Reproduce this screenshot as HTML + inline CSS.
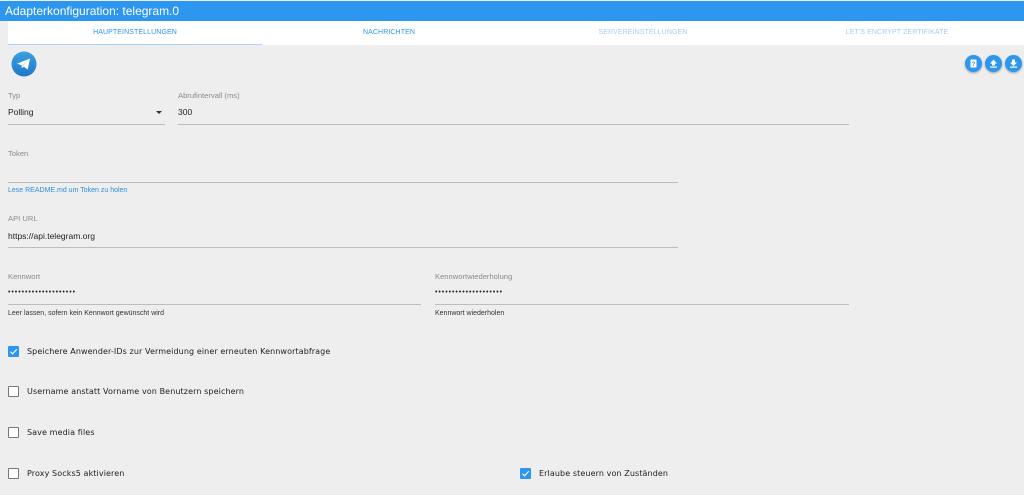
<!DOCTYPE html>
<html><head><meta charset="utf-8"><style>
*{margin:0;padding:0;box-sizing:border-box}
body{width:1024px;height:495px;background:#eeeeee;font-family:"Liberation Sans",sans-serif;position:relative;overflow:hidden}
.a{position:absolute}
.hdr{left:0;top:1px;width:1024px;height:20px;background:#2d97f0;color:#fff;font-size:12px;line-height:20px;padding-left:5px}
.tabs{left:8px;top:21px;width:1016px;height:24px;background:#fff}
.tab{position:absolute;top:0;width:254px;height:24px;line-height:24px;text-align:center;font-size:7px;color:#2d97f0;letter-spacing:0.1px}
.lbl{font-size:7.6px;color:#8a8a8a}
.val{font-size:8.5px;color:#222}
.dots{font-size:7px;color:#222;letter-spacing:0.95px}
.line{height:1px;background:#bdbdbd}
.help{font-size:7px;color:#333}
.cb{width:11px;height:11px;border:1px solid #777;border-radius:1px;background:#fff}
.cb.on{background:#2d97f0;border-color:#2d97f0}
.ct{font-family:"DejaVu Sans",sans-serif;font-size:8px;color:#222;letter-spacing:0.1px}
.btn{width:17px;height:17px;border-radius:50%;background:#2d97f0;box-shadow:0 1px 2px rgba(0,0,0,.35)}
</style></head><body>
<div class="a hdr">Adapterkonfiguration: telegram.0</div>
<div class="a tabs">
<div class="tab" style="left:0">HAUPTEINSTELLUNGEN</div>
<div class="tab" style="left:254px">NACHRICHTEN</div>
<div class="tab" style="left:508px;color:#a6cdf3">SERVEREINSTELLUNGEN</div>
<div class="tab" style="left:762px;color:#a6cdf3">LET'S ENCRYPT ZERTIFIKATE</div>
<div class="a" style="left:0;top:23px;width:254px;height:1px;background:#aed3f6"></div>
</div>
<svg class="a" style="left:11px;top:51px" width="26" height="26" viewBox="0 0 26 26"><defs><linearGradient id="g" x1="0" y1="0" x2="0" y2="1"><stop offset="0" stop-color="#3aa0e6"/><stop offset="1" stop-color="#1f78c8"/></linearGradient></defs><circle cx="13" cy="13" r="12.5" fill="url(#g)"/><path d="M6 12.6 L19 7.5 L16.8 18.5 L12.6 15.6 L10.8 17.3 L10.6 14.4 Z" fill="#fff"/><path d="M10.6 14.4 L17 9.4 L12 15.2" fill="#cfe3f5"/></svg>
<div class="a btn" style="left:965px;top:55px"><svg width="17" height="17"><rect x="5.5" y="4.5" width="6" height="8" fill="#fff"/><text x="8.5" y="11" font-size="6" text-anchor="middle" fill="#2d97f0" font-family="Liberation Sans" font-weight="bold">?</text></svg></div>
<div class="a btn" style="left:985px;top:55px"><svg width="17" height="17"><path d="M8.5 4.5 L12 8.5 H10 V10.5 H7 V8.5 H5 Z" fill="#fff"/><rect x="5" y="11.5" width="7" height="1.2" fill="#fff"/></svg></div>
<div class="a btn" style="left:1005px;top:55px"><svg width="17" height="17"><path d="M7 4.5 H10 V7.5 H12 L8.5 11 L5 7.5 H7 Z" fill="#fff"/><rect x="5" y="11.5" width="7" height="1.2" fill="#fff"/></svg></div>

<div class="a lbl" style="left:8px;top:91px">Typ</div>
<div class="a val" style="left:8px;top:107px">Polling</div>
<div class="a" style="left:156px;top:111px;width:0;height:0;border-left:3px solid transparent;border-right:3px solid transparent;border-top:3px solid #333"></div>
<div class="a line" style="left:8px;top:124px;width:157px"></div>
<div class="a lbl" style="left:178px;top:91px">Abrufintervall (ms)</div>
<div class="a val" style="left:178px;top:107px">300</div>
<div class="a line" style="left:178px;top:124px;width:671px"></div>

<div class="a lbl" style="left:8px;top:149px">Token</div>
<div class="a line" style="left:8px;top:182px;width:670px"></div>
<div class="a help" style="left:8px;top:187px;color:#2d8fe0">Lese README.md um Token zu holen</div>

<div class="a lbl" style="left:8px;top:214px">API URL</div>
<div class="a val" style="left:8px;top:231px">https://api.telegram.org</div>
<div class="a line" style="left:8px;top:247px;width:670px"></div>

<div class="a lbl" style="left:8px;top:272px">Kennwort</div>
<div class="a dots" style="left:8px;top:289px">••••••••••••••••••••</div>
<div class="a line" style="left:8px;top:304px;width:413px"></div>
<div class="a help" style="left:8px;top:310px">Leer lassen, sofern kein Kennwort gewünscht wird</div>
<div class="a lbl" style="left:435px;top:272px">Kennwortwiederholung</div>
<div class="a dots" style="left:435px;top:289px">••••••••••••••••••••</div>
<div class="a line" style="left:435px;top:304px;width:414px"></div>
<div class="a help" style="left:435px;top:310px">Kennwort wiederholen</div>

<div class="a cb on" style="left:8px;top:346px"><svg width="11" height="11" style="position:absolute;left:-1px;top:-1px"><path d="M2.5 5.8 L4.6 7.8 L8.8 3.3" stroke="#fff" stroke-width="1.1" fill="none"/></svg></div>
<div class="a ct" style="left:27px;top:347px">Speichere Anwender-IDs zur Vermeidung einer erneuten Kennwortabfrage</div>
<div class="a cb" style="left:8px;top:386px"></div>
<div class="a ct" style="left:27px;top:387px">Username anstatt Vorname von Benutzern speichern</div>
<div class="a cb" style="left:8px;top:427px"></div>
<div class="a ct" style="left:27px;top:428px">Save media files</div>
<div class="a cb" style="left:8px;top:468px"></div>
<div class="a ct" style="left:27px;top:469px">Proxy Socks5 aktivieren</div>
<div class="a cb on" style="left:520px;top:468px"><svg width="11" height="11" style="position:absolute;left:-1px;top:-1px"><path d="M2.5 5.8 L4.6 7.8 L8.8 3.3" stroke="#fff" stroke-width="1.1" fill="none"/></svg></div>
<div class="a ct" style="left:539px;top:469px">Erlaube steuern von Zuständen</div>
</body></html>
